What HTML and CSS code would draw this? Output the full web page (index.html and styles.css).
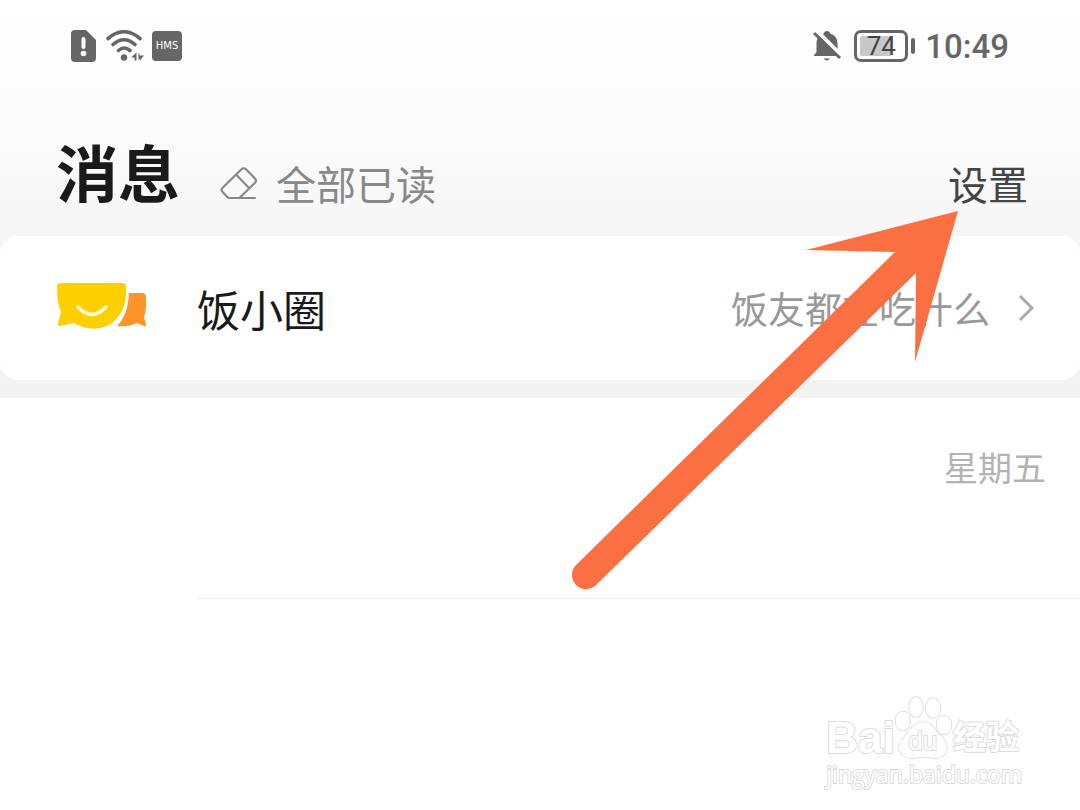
FILE: index.html
```
<!DOCTYPE html>
<html lang="zh-CN">
<head>
  <meta charset="UTF-8" />
  <meta name="viewport" content="width=device-width, initial-scale=1" />
  <title>消息</title>
  <link rel="stylesheet" href="styles.css">
</head>
<body>

<div class="top">
  <div class="status-bar">
    <div class="status-left">
      <svg width="25" height="32" viewBox="0 0 25 32">
        <path d="M4 0h11l10 10v18a4 4 0 0 1-4 4H4a4 4 0 0 1-4-4V4a4 4 0 0 1 4-4z" fill="#666"/>
        <path d="M12.500 9v8" stroke="#fff" stroke-width="4" stroke-linecap="round"/>
        <circle cx="12.500" cy="23.500" r="2.800" fill="#fff"/>
      </svg>
      <svg class="wifi" width="38" height="32" viewBox="0 0 38 32">
        <g fill="none" stroke="#666" stroke-width="3.600" stroke-linecap="round">
          <path d="M2 8.500Q18 -5 34 8.500"/>
          <path d="M7 14.500Q18 5 29 14.500"/>
          <path d="M12.500 20.500Q18 15.500 24 20.500"/>
        </g>
        <circle cx="18" cy="27.500" r="3.200" fill="#666"/>
        <path d="M30.500 22.500v8h-2v-3H25zM32.500 30.500v-8l1.500 3h4l-4 5-1-2z" fill="#666"/>
      </svg>
      <span class="hms">HMS</span>
    </div>
    <div class="status-right">
      <svg width="30" height="32" viewBox="0 0 30 32">
        <path d="M15 1c2 0 3 1 3 2.500 5 1.500 7.500 5 7.500 10V22l3 4H1.500l3-4v-8.500c0-5 2.500-8.500 7.500-10C12 2 13 1 15 1z" fill="#666"/>
        <path d="M11.500 28.500h6.500q-3.200 4-6.500 0z" fill="#666"/>
        <path d="M4 0l26 26" stroke="#fdfdfd" stroke-width="4"/>
        <path d="M2 3l26 25" stroke="#666" stroke-width="3"/>
      </svg>
      <span class="battery"><span class="battery-level">74</span></span>
      <span class="clock">10:49</span>
    </div>
  </div>

  <header class="header">
    <h1>消息</h1>
    <button class="read-all" type="button">
      <svg class="eraser" width="38" height="34" viewBox="0 0 38 34" fill="none" stroke="#888" stroke-width="2.200" stroke-linecap="round" stroke-linejoin="round">
        <path d="M35 32H9.500a3 3 0 0 1-2.200-.9L2.600 26a3 3 0 0 1 0-4.200L21.500 3.200a3.200 3.200 0 0 1 4.500 0l9 9.300a3 3 0 0 1 0 4.200L19.500 32M16.500 9l12.500 13"/>
      </svg>
      全部已读
    </button>
    <button class="settings" type="button">设置</button>
  </header>

  <a class="card" href="#">
    <svg class="card-logo" width="92" height="48" viewBox="0 0 92 48">
      <path d="M73 11h13q4 0 4 4v9q0 6-2 11l2 8q0 2-2 1l-7-3q-9 4-20 3 11-11 12-33z" fill="#ff9529"/>
      <path d="M5 1h61q4 0 4 4c1 18-5 29-14 36-11 8-26 7-38 0q-7 2-14 3-3 0-2-3l3-11Q1 22 1 5q0-4 4-4z" fill="#ffd000"/>
      <path d="M22 25q14 15 28 0" fill="none" stroke="#fffbe0" stroke-width="3.500" stroke-linecap="round"/>
    </svg>
    <span class="card-title">饭小圈</span>
    <span class="card-note">饭友都在吃什么</span>
    <svg width="16" height="28" viewBox="0 0 16 28" fill="none" stroke="#aaa" stroke-width="3">
      <path d="M2 2l12 12L2 26"/>
    </svg>
  </a>
</div>

<ul class="messages">
  <li class="message"><time class="message-day">星期五</time></li>
</ul>

<svg class="pointer" width="386" height="379" viewBox="0 0 386 379">
  <path d="M386 0L343 151L344 62L24 374A14 14 0 0 1 4 354L323 41L234 39z" fill="#fa7042"/>
</svg>

<div class="watermark">
  <div class="watermark-logo">
    <span class="watermark-bai">Bai</span>
    <span class="watermark-paw">
      <svg width="58" height="64" viewBox="0 0 58 64" fill="#fff" stroke="#d9d9d9" stroke-width="1.500">
        <ellipse cx="8" cy="25" rx="7.500" ry="9.500"/>
        <ellipse cx="21" cy="11" rx="7" ry="10"/>
        <ellipse cx="38" cy="12" rx="7.500" ry="10"/>
        <ellipse cx="49" cy="29" rx="7.500" ry="9.500"/>
        <path d="M28 26c8 0 11 6 15 11 5 5 9 8 9 14 0 8-7 12-14 11-6-1-12-1-18 0-9 1-16-3-16-11 0-6 5-9 9-14 4-6 7-11 15-11z"/>
      </svg>
      <span class="watermark-du">du</span>
    </span>
    <span class="watermark-name">经验</span>
  </div>
  <div class="watermark-url">jingyan.baidu.com</div>
</div>

</body>
</html>
```
FILE: styles.css
```
:root {
  --icon-color: #666;
  --title-color: #1a1a1a;
  --line-color: #ececec;
}

* {
  box-sizing: border-box;
}

body {
  margin: 0;
  min-height: 100vh;
  position: relative;
  background: #fff;
  color: var(--title-color);
  font-family: Roboto, "Noto Sans CJK SC", sans-serif;
}

svg {
  display: block;
  flex: none;
}

button {
  padding: 0;
  border: none;
  background: none;
  font-family: inherit;
  font-size: 40px;
  line-height: 56px;
  cursor: pointer;
}

.top {
  padding-bottom: 18px;
  background: linear-gradient(#fff, #fbfbfb 130px, #f6f6f6 236px, #f3f3f3);
}

.status-bar {
  display: flex;
  justify-content: space-between;
  align-items: center;
  height: 92px;
  padding: 0 71px;
  color: var(--icon-color);
}

.status-left,
.status-right {
  display: flex;
  align-items: center;
}

.wifi {
  margin: 0 8px 0 10px;
}

.hms {
  width: 30px;
  border-radius: 4px;
  background: var(--icon-color);
  color: #fff;
  font-family: "DejaVu Sans", sans-serif;
  font-size: 10px;
  line-height: 30px;
  text-align: center;
}

.battery {
  position: relative;
  width: 54px;
  height: 32px;
  margin: 0 17px 0 12px;
  padding: 3px;
  border: 3px solid var(--icon-color);
  border-radius: 7px;
}

.battery::after {
  content: "";
  position: absolute;
  top: 5px;
  right: -10px;
  width: 4px;
  height: 16px;
  border-radius: 2px;
  background: var(--icon-color);
}

.battery-level {
  display: block;
  border-radius: 2px;
  background: linear-gradient(90deg, #c8c8c8 74%, transparent 74%);
  color: #444;
  font-size: 26px;
  line-height: 20px;
  text-align: center;
}

.clock {
  padding-top: 2px;
  font-size: 33px;
  font-weight: 500;
  line-height: 40px;
}

.header {
  display: flex;
  align-items: flex-end;
  height: 144px;
  padding: 0 52px 21px 56px;
}

h1 {
  margin: 0;
  font-size: 62px;
  line-height: 76px;
}

.read-all {
  display: flex;
  align-items: center;
  gap: 18px;
  margin-left: 40px;
  color: #888;
}

.eraser {
  margin-bottom: 8px;
}

.settings {
  margin-left: auto;
  color: #444;
}

.card {
  display: flex;
  align-items: center;
  height: 144px;
  padding: 0 46px 0 56px;
  border-radius: 18px;
  background: #fff;
  color: inherit;
  text-decoration: none;
}

.card-logo {
  margin-bottom: 4px;
}

.card-title {
  margin-left: 49px;
  font-size: 43px;
}

.card-note {
  margin: 0 28px 0 auto;
  color: #999;
  font-size: 37px;
}

.messages {
  margin: 0;
  padding: 0 0 0 198px;
  list-style: none;
}

.message {
  height: 201px;
  padding: 44px 34px 0 0;
  border-bottom: 1px solid var(--line-color);
  text-align: right;
}

.message-day {
  color: #b3b3b3;
  font-size: 34px;
}

.pointer {
  position: absolute;
  top: 211px;
  right: 122px;
  pointer-events: none;
}

.watermark {
  position: absolute;
  right: 58px;
  bottom: 22px;
  color: #fff;
  font-family: "Liberation Sans", "Noto Sans CJK SC", sans-serif;
  -webkit-text-stroke: 2px #dcdcdc;
  paint-order: stroke fill;
}

.watermark-logo {
  display: flex;
  align-items: flex-end;
  height: 64px;
  font-weight: bold;
}

.watermark-bai {
  font-size: 44px;
  line-height: 44px;
}

.watermark-paw {
  position: relative;
}

.watermark-du {
  position: absolute;
  right: 2px;
  bottom: 4px;
  left: 0;
  font-size: 26px;
  font-weight: normal;
  line-height: 30px;
  text-align: center;
}

.watermark-name {
  font-size: 33px;
  line-height: 44px;
}

.watermark-url {
  font-family: "Open Sans", sans-serif;
  font-size: 23px;
  line-height: 28px;
}
```
